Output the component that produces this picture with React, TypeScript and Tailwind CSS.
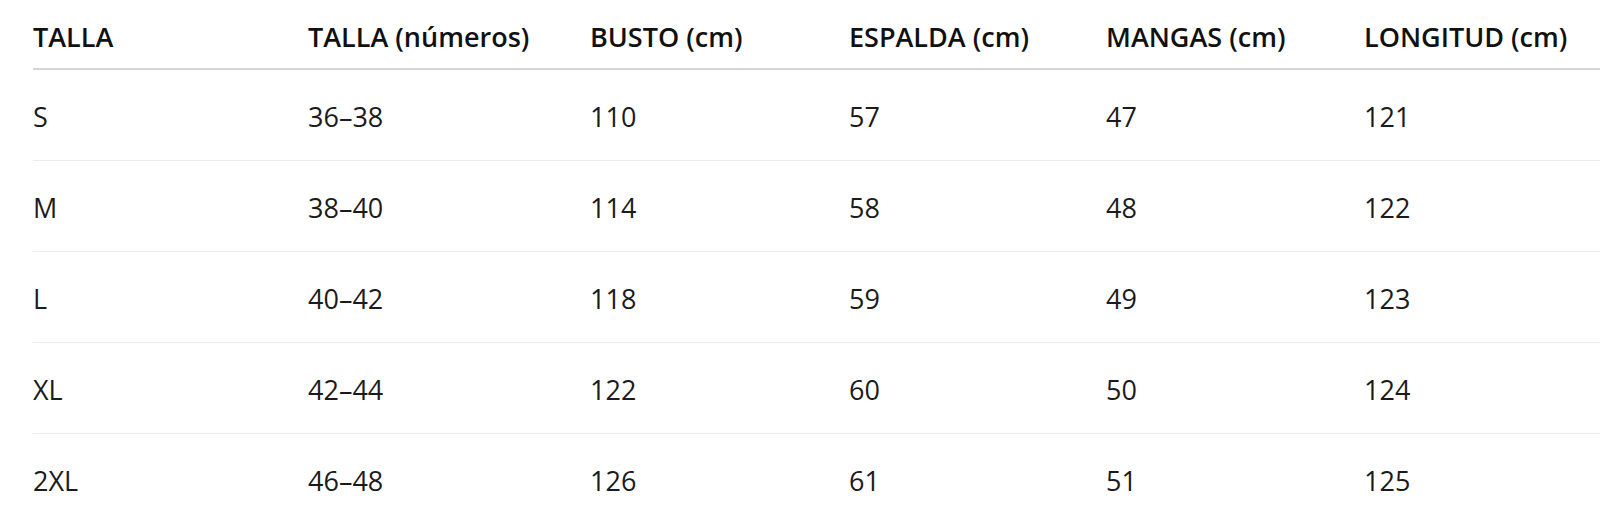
import React from "react";

const headers = ["TALLA", "TALLA (números)", "BUSTO (cm)", "ESPALDA (cm)", "MANGAS (cm)", "LONGITUD (cm)"];
const rows = [
  ["S", "36–38", "110", "57", "47", "121"],
  ["M", "38–40", "114", "58", "48", "122"],
  ["L", "40–42", "118", "59", "49", "123"],
  ["XL", "42–44", "122", "60", "50", "124"],
  ["2XL", "46–48", "126", "61", "51", "125"],
];

export default function App() {
  return (
    <div className="w-[1600px] h-[521px] overflow-hidden bg-white pl-[33px]" style={{ fontFamily: '"Open Sans", "Noto Sans", sans-serif' }}>
      <table className="table-fixed border-collapse w-[1567px] text-[27px] text-[#1b1b1b]">
        <colgroup>
          <col className="w-[275px]" />
          <col className="w-[282px]" />
          <col className="w-[259px]" />
          <col className="w-[257px]" />
          <col className="w-[258px]" />
          <col />
        </colgroup>
        <thead>
          <tr className="border-b-2 border-[#d6d6d6]">
            {headers.map((h) => (
              <th key={h} className="h-[69px] p-0 pt-[5px] text-left align-middle font-semibold text-[#111] leading-[36px] whitespace-nowrap">
                {h}
              </th>
            ))}
          </tr>
        </thead>
        <tbody>
          {rows.map((r, i) => (
            <tr key={i} className="border-b border-[#ececec]">
              {r.map((c, j) => (
                <td key={j} className="h-[91px] p-0 pt-[4px] text-left align-middle leading-[36px]">
                  {c}
                </td>
              ))}
            </tr>
          ))}
        </tbody>
      </table>
    </div>
  );
}
